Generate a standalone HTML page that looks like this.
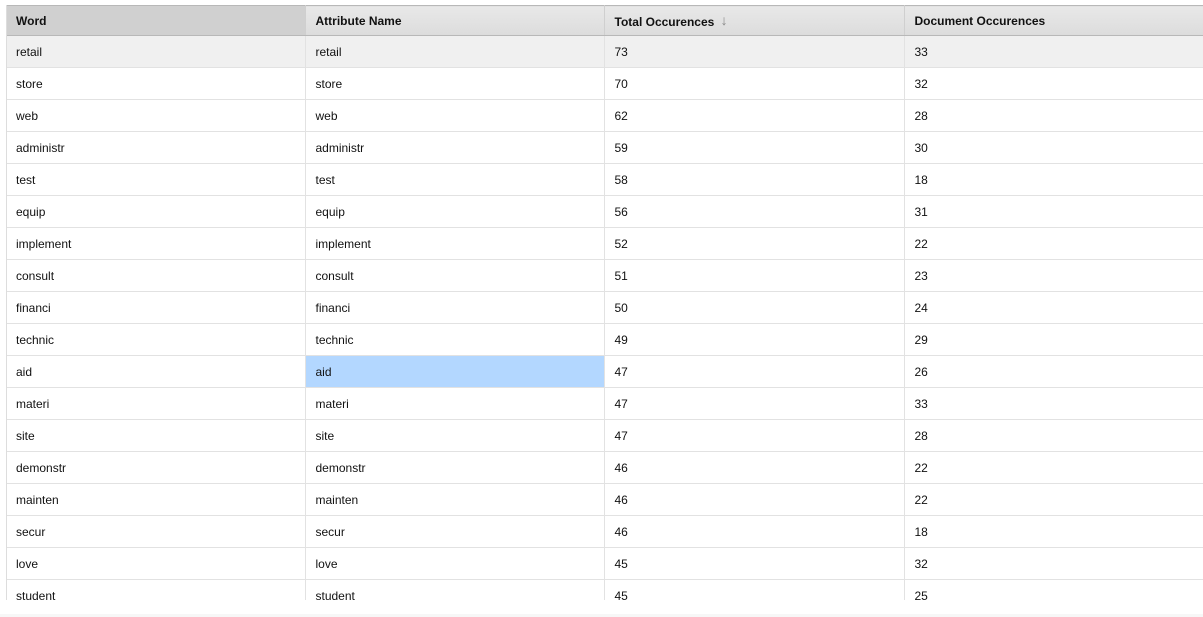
<!DOCTYPE html>
<html><head><style>
body{margin:0;width:1203px;height:617px;background:#fff;font-family:"Liberation Sans",Arial,sans-serif;font-size:12px;color:#111;overflow:hidden;position:relative}
.wrap{position:absolute;left:6px;top:5px;width:1197px;height:595px;overflow:hidden;border-left:1px solid #ddd}
table{border-collapse:collapse;width:1196px;table-layout:fixed}
th{height:29px;padding:0 0 0 10px;text-align:left;font-weight:bold;background:linear-gradient(#e8e8e8,#dcdcdc);border-top:1px solid #b8b8b8;border-bottom:1px solid #b8b8b8;border-right:1px solid #cfcfcf}
th.s{background:#d0d0d0}
td{height:31px;padding:0 0 0 10px;border-bottom:1px solid #e2e2e2;border-right:1px solid #e2e2e2}
th:first-child,td:first-child{padding-left:9px}
tr.h td{background:#f0f0f0}
td.sel{background:#b3d7ff}
.bot{position:absolute;left:0;top:614px;width:1203px;height:3px;background:#f7f7f7}
</style></head><body>
<div class="wrap"><table>
<colgroup><col style="width:298px"><col style="width:299px"><col style="width:300px"><col style="width:299px"></colgroup>
<tr><th class="s">Word</th><th>Attribute Name</th><th>Total Occurences <span style="color:#888;font-weight:bold;font-size:14px;margin-left:3px;position:relative;top:-1px">&#8595;</span></th><th>Document Occurences</th></tr>
<tr class="h"><td>retail</td><td>retail</td><td>73</td><td>33</td></tr>
<tr><td>store</td><td>store</td><td>70</td><td>32</td></tr>
<tr><td>web</td><td>web</td><td>62</td><td>28</td></tr>
<tr><td>administr</td><td>administr</td><td>59</td><td>30</td></tr>
<tr><td>test</td><td>test</td><td>58</td><td>18</td></tr>
<tr><td>equip</td><td>equip</td><td>56</td><td>31</td></tr>
<tr><td>implement</td><td>implement</td><td>52</td><td>22</td></tr>
<tr><td>consult</td><td>consult</td><td>51</td><td>23</td></tr>
<tr><td>financi</td><td>financi</td><td>50</td><td>24</td></tr>
<tr><td>technic</td><td>technic</td><td>49</td><td>29</td></tr>
<tr><td>aid</td><td class="sel">aid</td><td>47</td><td>26</td></tr>
<tr><td>materi</td><td>materi</td><td>47</td><td>33</td></tr>
<tr><td>site</td><td>site</td><td>47</td><td>28</td></tr>
<tr><td>demonstr</td><td>demonstr</td><td>46</td><td>22</td></tr>
<tr><td>mainten</td><td>mainten</td><td>46</td><td>22</td></tr>
<tr><td>secur</td><td>secur</td><td>46</td><td>18</td></tr>
<tr><td>love</td><td>love</td><td>45</td><td>32</td></tr>
<tr><td>student</td><td>student</td><td>45</td><td>25</td></tr>
</table></div>
<div class="bot"></div>
</body></html>
